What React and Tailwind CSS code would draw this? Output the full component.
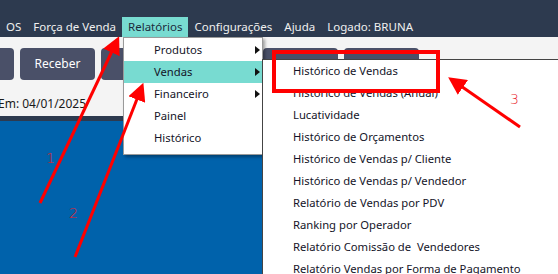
import React from "react";

const topMenu = ["OS", "Força de Venda", "Relatórios", "Configurações", "Ajuda", "Logado: BRUNA"];

const relatorios = [
  { label: "Produtos", sub: true },
  { label: "Vendas", sub: true, active: true },
  { label: "Financeiro", sub: true },
  { label: "Painel" },
  { label: "Histórico" },
];

const vendas = [
  "Histórico de Vendas",
  "Histórico de Vendas (Anual)",
  "Lucatividade",
  "Histórico de Orçamentos",
  "Histórico de Vendas p/ Cliente",
  "Histórico de Vendas p/ Vendedor",
  "Relatório de Vendas por PDV",
  "Ranking por Operador",
  "Relatório Comissão de  Vendedores",
  "Relatório Vendas por Forma de Pagamento",
];

function Caret() {
  return (
    <svg width="5" height="8" viewBox="0 0 5 8" className="shrink-0">
      <path d="M0 0 L5 4 L0 8 Z" fill="#111" />
    </svg>
  );
}

function Annotations() {
  return (
    <svg className="absolute inset-0 pointer-events-none" width="558" height="274" viewBox="0 0 558 274">
      <defs>
        <marker id="head" markerWidth="6" markerHeight="6" refX="2" refY="3" orient="auto" markerUnits="strokeWidth">
          <path d="M0 0 L6 3 L0 6 Z" fill="#ff0000" />
        </marker>
      </defs>
      <line x1="40" y1="203" x2="114" y2="47" stroke="#ff0000" strokeWidth="3" markerEnd="url(#head)" />
      <line x1="75" y1="257" x2="139" y2="94" stroke="#ff0000" strokeWidth="3" markerEnd="url(#head)" />
      <line x1="520" y1="127" x2="458" y2="84" stroke="#ff0000" strokeWidth="3" markerEnd="url(#head)" />
      <rect x="274" y="52" width="164" height="39" fill="none" stroke="#ff0000" strokeWidth="4" />
      <text x="46" y="163" fill="#e8202a" fontSize="14" fontFamily="DejaVu Sans, sans-serif" fontWeight="300">1</text>
      <text x="69" y="218" fill="#e8202a" fontSize="14" fontFamily="DejaVu Sans, sans-serif" fontWeight="300">2</text>
      <text x="510" y="104" fill="#e8202a" fontSize="14" fontFamily="DejaVu Sans, sans-serif" fontWeight="300">3</text>
    </svg>
  );
}

export default function App() {
  return (
    <div className="relative w-[558px] h-[274px] overflow-hidden bg-[#0062ab] font-['Noto_Sans',sans-serif] text-[11.25px]">
      {/* title + menu bar */}
      <div className="h-[37px] bg-[#2d3a4f] flex items-end">
        <div className="flex h-[20px] items-center text-[#f0f0f0] text-[11.5px] pl-[-1px]">
          {topMenu.map((m) => (
            <div
              key={m}
              className={
                m === "Relatórios"
                  ? "h-full flex items-center px-[6px] bg-[#78dbd1] text-[#1c2b3c]"
                  : "h-full flex items-center px-[6px]"
              }
            >
              {m}
            </div>
          ))}
        </div>
      </div>

      {/* toolbar */}
      <div className="h-[79px] bg-[#f4f4f4] flex flex-col">
        <div className="flex gap-[6px] mt-[11px] -ml-[61px]">
          {["", "Receber", "", "", "", ""].map((b, i) => (
            <div key={i} className="w-[75px] h-[32px] shrink-0 rounded-[4px] bg-[#4a5068] text-white text-[12px] flex items-center justify-center">
              {b}
            </div>
          ))}
        </div>
        <div className="mt-auto mb-[3px] -ml-[2px] text-[#1a1a1a] text-[12px]">Em: 04/01/2025</div>
      </div>
      <div className="h-[5px] bg-[#2d3a4f]" />

      {/* Relatórios dropdown */}
      <div className="absolute left-[123px] top-[37px] w-[140px] bg-white border border-[#9a9a9a] pt-[1px] pb-[5px] shadow-[2px_2px_3px_rgba(0,0,0,0.35)] text-[#141428]">
        {relatorios.map((r) => (
          <div
            key={r.label}
            className={`h-[22px] flex items-center pl-[30px] pr-[2px] ${r.active ? "bg-[#78dbd1]" : ""}`}
          >
            <span className="flex-1">{r.label}</span>
            {r.sub && <Caret />}
          </div>
        ))}
      </div>

      {/* Vendas submenu */}
      <div className="absolute left-[262px] top-[59px] w-[310px] h-[230px] bg-white border border-[#444] text-[#141428]">
        {vendas.map((v) => (
          <div key={v} className="h-[22px] flex items-center pl-[30px] whitespace-pre">
            {v}
          </div>
        ))}
      </div>

      <Annotations />
    </div>
  );
}
